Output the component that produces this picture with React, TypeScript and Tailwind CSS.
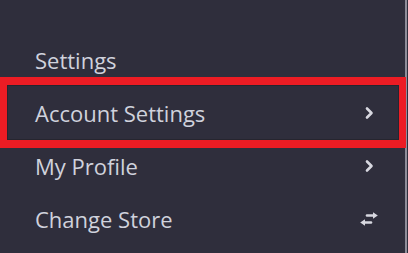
const rows = [
  { label: "Settings", icon: null },
  { label: "Account Settings", icon: "chevron" },
  { label: "My Profile", icon: "chevron" },
  { label: "Change Store", icon: "swap" },
] as const;

function Chevron() {
  return (
    <svg width="10" height="14" viewBox="0 0 10 14" className="text-[#d8d8e0]">
      <polyline points="3,2.5 7.5,7 3,11.5" fill="none" stroke="currentColor" strokeWidth="2.6" strokeLinecap="round" strokeLinejoin="round" />
    </svg>
  );
}

function Swap() {
  return (
    <svg width="20" height="14" viewBox="0 0 20 14" className="text-[#d8d8e0]">
      <path d="M8 3.5h7" stroke="currentColor" strokeWidth="2.6" strokeLinecap="round" />
      <path d="M14 0.3l4.8 3.2-4.8 3.2z" fill="currentColor" />
      <path d="M12 10.5h-7" stroke="currentColor" strokeWidth="2.6" strokeLinecap="round" />
      <path d="M6 7.3l-4.8 3.2 4.8 3.2z" fill="currentColor" />
    </svg>
  );
}

export default function App() {
  return (
    <div className="relative h-[253px] w-[408px] overflow-hidden bg-[#2f2e3c] font-['Open_Sans',sans-serif]">
      <div className="flex h-full w-[407px] flex-col border-r-2 border-[#8e8d99] pt-[33px]">
        {rows.map((row) => (
          <div key={row.label} className="flex h-[53px] items-center justify-between pl-[35px] pr-[26px]">
            <span className="text-[22px] font-medium leading-[30px] text-[#d0d2dc]">{row.label}</span>
            <span className="flex w-[20px] justify-center">
              {row.icon === "chevron" && <Chevron />}
              {row.icon === "swap" && <Swap />}
            </span>
          </div>
        ))}
      </div>
      {/* highlight box */}
      <div className="absolute left-0 top-[77px] h-[71px] w-[406px] border-x-[7px] border-y-8 border-[#ec1c24]">
        <div className="h-full w-full border border-[#26252f]" />
      </div>
    </div>
  );
}
